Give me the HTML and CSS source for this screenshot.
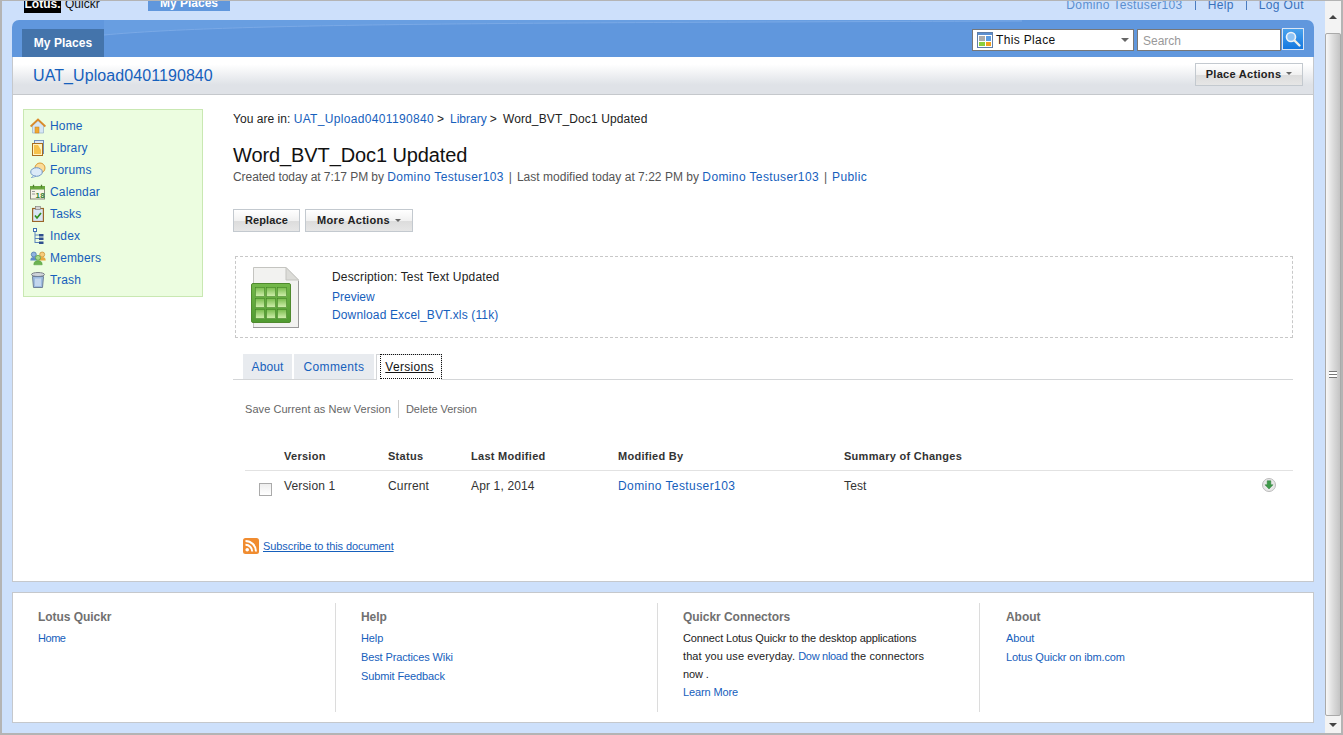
FILE: index.html
```html
<!DOCTYPE html>
<html lang="en">
<head>
<meta charset="utf-8">
<title>Word_BVT_Doc1 Updated</title>
<link rel="stylesheet" href="styles.css">
</head>
<body>
<div class="window">
  <div class="page">
    <div class="topstrip">
      <div class="brand"><span class="lotus">Lotus.</span><span class="quickr">Quickr</span></div>
      <a class="toptab">My Places</a>
      <div class="toplinks">
        <a class="user">Domino Testuser103</a><i></i><a>Help</a><i></i><a>Log Out</a>
      </div>
    </div>
    <div class="banner">
      <svg class="swoosh" viewBox="0 0 1302 37" preserveAspectRatio="none"><path d="M92 15C220 3 520 3 1010 1V0H92Z" fill="#689ee1"/><path d="M92 15C220 3 520 3 1010 1" fill="none" stroke="#7aa9e6" stroke-width="1"/></svg>
      <a class="bannertab">My Places</a>
      <div class="searchbox">
        <div class="scope">
          <svg class="scopeicon" width="16" height="16" viewBox="0 0 16 16"><rect x=".5" y=".5" width="15" height="15" fill="#fff" stroke="#5f7ea8"/><rect x="1" y="1" width="14" height="2" fill="#5b8fd0"/><rect x="2" y="4" width="6" height="5" fill="#aaa"/><rect x="9" y="4" width="5" height="5" fill="#5b9be0"/><rect x="2" y="10" width="6" height="4" fill="#8ccf3c"/><rect x="9" y="10" width="5" height="4" fill="#f0a020"/></svg>
          <span class="scopetext">This Place</span>
          <span class="caret"></span>
        </div>
        <div class="searchinput">Search</div>
        <div class="searchbtn"><svg width="18" height="18" viewBox="0 0 18 18"><circle cx="7" cy="7" r="4.500" fill="#8fc4f5" stroke="#eef3f8" stroke-width="1.600"/><path d="M10.500 10.500L15.500 15.500" stroke="#f0f0e8" stroke-width="2.400" stroke-linecap="round"/></svg></div>
      </div>
    </div>
    <div class="placebar">
      <a class="placename">UAT_Upload0401190840</a>
      <a class="btn btn-place">Place Actions<span class="caret small"></span></a>
    </div>
    <div class="main">
      <nav class="side">
        <a class="navitem"><svg class="navicon" viewBox="0 0 16 16"><path d="M2.500 7.500L8 2.500l5.500 5v7.500h-11z" fill="#d6e6f5" stroke="#9ab0c8" stroke-width=".7"/><rect x="5" y="9" width="4" height="6" fill="#f0a830" stroke="#c77f20" stroke-width=".5"/><path d="M.6 8.500L8 1.500l7.400 7" fill="none" stroke="#d98a2b" stroke-width="1.800"/></svg>Home</a>
        <a class="navitem"><svg class="navicon" viewBox="0 0 16 16"><rect x="4.500" y=".5" width="9" height="13" fill="#dbe7f5" stroke="#6f8fbc"/><rect x="2.500" y="3.500" width="10" height="12" fill="#fff3c0" stroke="#a86d20"/><path d="M4 5h4l3 5v4H4z" fill="#f6c24c"/></svg>Library</a>
        <a class="navitem"><svg class="navicon" viewBox="0 0 16 16"><circle cx="10" cy="6" r="5" fill="#fbdc98" stroke="#d99a35"/><ellipse cx="6.500" cy="10" rx="5.800" ry="4.300" fill="#dbeaf8" stroke="#6f97c6"/><path d="M3.500 13.500L1 16l5-1.700z" fill="#dbeaf8" stroke="#6f97c6" stroke-width=".6"/></svg>Forums</a>
        <a class="navitem"><svg class="navicon" viewBox="0 0 16 16"><rect x=".5" y="2.500" width="14" height="12.500" fill="#f5f3e8" stroke="#8a8a7a"/><rect x="0" y="2" width="15" height="3.500" fill="#6aa83e"/><path d="M3.500 .8v2.700M11.500 .8v2.700" stroke="#4f7f2e" stroke-width="1.300"/><path d="M2 7.500h3M2 10h3" stroke="#999"/><text class="caldate" x="5.600" y="13.500">18</text></svg>Calendar</a>
        <a class="navitem"><svg class="navicon" viewBox="0 0 16 16"><rect x="2.600" y="2.500" width="10.800" height="13" fill="#d9e6f6" stroke="#9a6528" stroke-width="1.200"/><rect x="5.500" y=".5" width="5" height="3" fill="#d4d4d4" stroke="#777" stroke-width=".6"/><path d="M5 9.500l2 2.500 4-5" fill="none" stroke="#2f8f1e" stroke-width="1.700"/></svg>Tasks</a>
        <a class="navitem"><svg class="navicon" viewBox="0 0 16 16"><rect x="3.500" y=".5" width="3" height="3" fill="#fff" stroke="#3d6fb0"/><path d="M5 4v11M5 7h4M5 10.500h4M5 14.500h4" fill="none" stroke="#5b84bb"/><rect x="9" y="6" width="4.500" height="2.500" fill="#2f4f8f"/><rect x="9" y="9.500" width="4.500" height="2.500" fill="#2f4f8f"/><rect x="9" y="13.500" width="4.500" height="2.500" fill="#2f4f8f"/></svg>Index</a>
        <a class="navitem"><svg class="navicon" viewBox="0 0 16 16"><circle cx="3.800" cy="4.500" r="2.500" fill="#8fb4e0" stroke="#3f6ea8" stroke-width=".7"/><path d="M.3 10.500c0-2.800 1.600-3.500 3.500-3.500s3.500.7 3.500 3.500z" fill="#5c8cc8"/><circle cx="12.200" cy="4.500" r="2.500" fill="#f6cd7c" stroke="#c78a28" stroke-width=".7"/><path d="M8.700 10.500c0-2.800 1.600-3.500 3.500-3.500s3.500.7 3.500 3.500z" fill="#e8a93f"/><circle cx="8" cy="7.800" r="2.500" fill="#a7d98c" stroke="#4f9a3a" stroke-width=".7"/><path d="M3.800 14.800c0-3.300 1.800-4 4.200-4s4.200.7 4.200 4z" fill="#6cb352" stroke="#4f9a3a" stroke-width=".5"/></svg>Members</a>
        <a class="navitem"><svg class="navicon" viewBox="0 0 16 16"><ellipse cx="8" cy="2.500" rx="6.500" ry="2" fill="#cfd4da" stroke="#7a8088"/><path d="M2.500 4.500h11l-1 11H3.500z" fill="#9dbbe0" stroke="#6f8098"/><path d="M6 6.500v7.500M8 6.500v7.500M10 6.500v7.500" stroke="#e9f1fb"/></svg>Trash</a>
      </nav>
      <div class="content">
        <div class="crumbs">You are in: <a class="crumbplace">UAT_Upload0401190840</a><span class="sep">&gt;</span><a>Library</a><span class="sep">&gt;</span><span class="crumbcur">Word_BVT_Doc1 Updated</span></div>
        <h1 class="doctitle">Word_BVT_Doc1 Updated</h1>
        <div class="meta">Created today at 7:17 PM by <a>Domino Testuser103</a><span class="pipe">|</span><span class="lastmod">Last modified today at 7:22 PM by </span><a>Domino Testuser103</a><span class="pipe">|</span><a>Public</a></div>
        <div class="actions">
          <a class="btn btn-replace">Replace</a>
          <a class="btn btn-more">More Actions<span class="caret small"></span></a>
        </div>
        <div class="docbox">
          <svg class="fileicon" width="48" height="61" viewBox="0 0 48 61">
            <defs>
              <linearGradient id="cell" x1="0" y1="0" x2="0" y2="1"><stop offset="0" stop-color="#78bb4c"/><stop offset="1" stop-color="#d2f0ae"/></linearGradient>
              <linearGradient id="sheet" x1="0" y1="0" x2="0" y2="1"><stop offset="0" stop-color="#74b84a"/><stop offset="1" stop-color="#4f9a30"/></linearGradient>
            </defs>
            <path d="M2.500 .5H35L47.500 13V60.500H2.500Z" fill="#f2f2f0" stroke="#c4c4c0"/>
            <path d="M35 .5L47.500 13H35Z" fill="#dcdcd8" stroke="#c4c4c0"/>
            <rect x="47" y="14" width="1" height="47" fill="#999"/>
            <rect x="2" y="60" width="46" height="1" fill="#999"/>
            <rect x=".5" y="16.500" width="39" height="39" rx="1.500" fill="url(#sheet)" stroke="#4f8a2e"/>
            <g fill="url(#cell)" stroke="#3f7f22" stroke-width=".5">
              <rect x="4.500" y="20.500" width="9" height="9"/><rect x="15.500" y="20.500" width="9" height="9"/><rect x="26.500" y="20.500" width="9" height="9"/>
              <rect x="4.500" y="31.500" width="9" height="9"/><rect x="15.500" y="31.500" width="9" height="9"/><rect x="26.500" y="31.500" width="9" height="9"/>
              <rect x="4.500" y="42.500" width="9" height="9"/><rect x="15.500" y="42.500" width="9" height="9"/><rect x="26.500" y="42.500" width="9" height="9"/>
            </g>
          </svg>
          <div class="docinfo">
            <div class="docdesc">Description: Test Text Updated</div>
            <a class="doclink first">Preview</a>
            <a class="doclink">Download Excel_BVT.xls (11k)</a>
          </div>
        </div>
        <div class="tabs">
          <a class="tab tab-about">About</a>
          <a class="tab tab-comments">Comments</a>
          <div class="tab-active"><a class="tab-focus">Versions</a></div>
        </div>
        <div class="vactions"><span>Save Current as New Version</span><i></i><span class="vdelete">Delete Version</span></div>
        <div class="vtable vhead">
          <span></span><span>Version</span><span>Status</span><span>Last Modified</span><span>Modified By</span><span>Summary of Changes</span><span></span>
        </div>
        <div class="vtable vrow">
          <span class="checkcell"><span class="check"></span></span><span>Version 1</span><span>Current</span><span>Apr 1, 2014</span><a>Domino Testuser103</a><span>Test</span>
          <span class="dlcell"><svg width="14" height="14" viewBox="0 0 14 14"><circle cx="7" cy="7" r="6.500" fill="#e8e8e8" stroke="#bbb"/><path d="M5.200 2.800h3.600v4h2.200L7 11 3 6.800h2.200z" fill="#3f9a4a" stroke="#2a7a36" stroke-width=".5"/></svg></span>
        </div>
        <div class="subscribe">
          <svg width="16" height="16" viewBox="0 0 16 16"><rect width="16" height="16" rx="2.500" fill="#f08c30"/><circle cx="4.200" cy="11.800" r="1.800" fill="#fff"/><path d="M2.500 6.800a6.700 6.700 0 0 1 6.700 6.700M2.500 3a10.500 10.500 0 0 1 10.500 10.500" fill="none" stroke="#fff" stroke-width="2"/></svg>
          <a>Subscribe to this document</a>
        </div>
      </div>
    </div>
    <footer class="footer">
      <div class="fcol">
        <h3>Lotus Quickr</h3>
        <a>Home</a>
      </div>
      <div class="fcol">
        <h3>Help</h3>
        <a>Help</a>
        <a>Best Practices Wiki</a>
        <a>Submit Feedback</a>
      </div>
      <div class="fcol">
        <h3>Quickr Connectors</h3>
        <p>Connect Lotus Quickr to the desktop applications<br><span class="line2">that you use everyday. <a class="inl">Dow nload</a> the connectors</span><br>now .</p>
        <a>Learn More</a>
      </div>
      <div class="fcol last">
        <h3>About</h3>
        <a>About</a>
        <a>Lotus Quickr on ibm.com</a>
      </div>
    </footer>
  </div>
  <div class="scrollbar">
    <div class="sbtn"><span class="arrow up"></span></div>
    <div class="thumb"><span class="grip"></span></div>
    <div class="sbtn bottom"><span class="arrow down"></span></div>
  </div>
</div>
</body>
</html>
```

FILE: styles.css
```css
* { box-sizing: border-box; }
html, body { margin: 0; padding: 0; height: 100%; overflow: hidden; }
body { font: 12px/14px "Liberation Sans", Arial, sans-serif; color: #222; }
a { color: #1660bc; text-decoration: none; }

.window { height: 735px; display: flex; border: 2px solid #b4b4b4; border-top-width: 1px; background: #cde0fb; }
.page { flex: 1; min-width: 0; padding: 0 11px 0 10px; display: flex; flex-direction: column; }

.topstrip { height: 19px; display: flex; overflow: hidden; align-items: flex-start; }
.brand { display: flex; margin: -2px 0 0 12px; width: 124px; height: 14px; align-items: flex-start; }
.lotus { background: #000; color: #fff; font-weight: bold; font-size: 12px; line-height: 10px; width: 37px; height: 14px; text-align: center; }
.quickr { color: #111; font-size: 12px; line-height: 10px; margin-left: 4px; }
.toptab { background: #6097dd; color: #fff; font-weight: bold; font-size: 12px; width: 82px; height: 10px; text-align: center; line-height: 5px; overflow: hidden; }
.toplinks { margin-left: auto; margin-right: 10px; margin-top: -3px; display: flex; align-items: flex-start; font-size: 12px; line-height: 14px; letter-spacing: .36px; }
.toplinks a { color: #3a72bb; }
.toplinks a.user { color: #5b8fd0; }
.toplinks i { width: 1px; height: 12px; background: #4a7cc0; margin: 0 12px; }

.banner { position: relative; height: 37px; background: #6097dd; border-radius: 7px 7px 0 0; display: flex; align-items: flex-end; justify-content: space-between; padding: 0 10px; }
.swoosh { position: absolute; inset: 0; width: 100%; height: 100%; }
.bannertab { position: relative; width: 82px; height: 28px; background: #4474ab; color: #fff; font-weight: bold; font-size: 12px; line-height: 28px; text-align: center; letter-spacing: .03px; }
.searchbox { position: relative; display: flex; align-self: flex-start; margin-top: 8px; align-items: flex-start; }
.scope { width: 162px; height: 22px; margin-top: 1px; background: #fff; border: 1px solid #777; display: flex; align-items: center; padding-left: 4px; margin-right: 3px; }
.scopeicon { flex: none; }
.scopetext { font-size: 12px; color: #111; margin-left: 3px; letter-spacing: .35px; flex: 1; }
.caret { width: 0; height: 0; border: 4px solid transparent; border-top: 4px solid #666; border-bottom: 0; margin-right: 4px; }
.caret.small { display: inline-block; border-width: 3px 3px 0; border-top-color: #666; margin: 0 0 2px 5px; vertical-align: middle; }
.searchinput { width: 144px; height: 22px; margin-top: 1px; background: #fff; border: 1px solid #777; padding-left: 5px; color: #999; font-size: 12px; line-height: 22px; }
.searchbtn { width: 22px; height: 22px; background: linear-gradient(#4aa2ec, #1478e0); border: 1px solid #dbe6f4; display: flex; align-items: center; justify-content: center; margin-left: 1px; }

.placebar { height: 38px; background: linear-gradient(#fff 0, #fff 20%, #dfe2e7 75%); border: 1px solid #c5c8cc; border-top: 0; display: flex; align-items: center; justify-content: space-between; padding: 0 10px 0 20px; }
.placename { font-size: 16px; line-height: 22px; color: #1660bc; letter-spacing: .08px; }

.btn { display: block; height: 23px; border: 1px solid #c3c9cf; background: linear-gradient(#fff 0, #f1f1f1 50%, #dcdcdc 52%, #e6e6e6 100%); color: #222; font-weight: bold; font-size: 11px; line-height: 21px; text-align: center; letter-spacing: .3px; }
.btn-place { width: 108px; margin-top: -3px; }
.btn-replace { width: 67px; letter-spacing: .15px; }
.btn-more { width: 108px; }

.main { flex: 1; min-height: 0; background: #fff; border: 1px solid #c5c8cc; border-top: 0; display: flex; align-items: flex-start; padding: 14px 20px 0 10px; }
.side { width: 180px; height: 188px; flex: none; background: #ecfde0; border: 1px solid #c9e8b2; padding: 5px 0 0 6px; }
.navitem { display: flex; align-items: center; height: 22px; font-size: 12px; letter-spacing: .15px; }
.navicon { width: 16px; height: 16px; flex: none; margin-right: 4px; }
.caldate { font: bold 8px "Liberation Sans", Arial, sans-serif; fill: #2f7f2e; }

.content { flex: 1; min-width: 0; margin-left: 30px; }
.crumbs { padding-top: 3px; color: #222; letter-spacing: .03px; }
.crumbplace { letter-spacing: .33px; }
.sep { margin: 0 6px 0 3px; }
.crumbcur { letter-spacing: .13px; }
.doctitle { margin: 17px 0 0; font-size: 20px; line-height: 24px; font-weight: normal; color: #111; letter-spacing: -.1px; }
.meta { margin-top: 3px; color: #555; letter-spacing: -.07px; }
.meta a { letter-spacing: .38px; }
.lastmod { letter-spacing: .02px; }
.pipe { margin: 0 5px; }
.actions { margin-top: 25px; display: flex; gap: 5px; }
.docbox { margin: 24px 0 0 2px; height: 82px; border: 1px dashed #c8c8c8; display: flex; padding: 10px 0 0 15px; }
.fileicon { flex: none; }
.docinfo { margin-left: 33px; display: flex; flex-direction: column; }
.docdesc { color: #222; line-height: 20px; letter-spacing: .17px; }
.doclink { display: block; line-height: 18px; letter-spacing: .14px; }
.doclink.first { line-height: 20px; margin-bottom: -1px; letter-spacing: 0; }

.tabs { margin-top: 16px; height: 26px; border-bottom: 1px solid #d4d6d8; display: flex; padding-left: 10px; }
.tab { height: 25px; background: #e8ebef; text-align: center; line-height: 26px; margin-right: 2px; }
.tab-about { width: 49px; letter-spacing: .1px; }
.tab-comments { width: 80px; letter-spacing: .35px; }
.tab-active { width: 66px; height: 26px; border: 1px solid #d4d6d8; border-bottom: 0; background: #fff; padding-left: 3px; }
.tab-focus { display: block; height: 25px; margin-top: -1px; margin-right: -1px; border: 1px dotted #111; color: #111; text-decoration: underline; text-align: center; line-height: 24px; letter-spacing: .3px; padding-right: 3px; }

.vactions { margin: 20px 0 0 12px; height: 18px; display: flex; align-items: center; font-size: 11px; color: #666; letter-spacing: .06px; }
.vdelete { letter-spacing: -.04px; }
.vactions i { width: 1px; height: 18px; background: #ccc; margin: 0 7px; }

.vtable { margin-left: 12px; display: grid; grid-template-columns: 39px 104px 83px 147px 226px 1fr 30px; align-items: center; }
.vhead { margin-top: 30px; height: 23px; border-bottom: 1px solid #e2e2e2; font-size: 11px; font-weight: bold; color: #333; letter-spacing: .28px; padding-bottom: 7px; }
.vrow { height: 30px; color: #333; }
.vrow span { letter-spacing: .15px; }
.vrow a { letter-spacing: .42px; }
.checkcell { display: flex; padding-left: 14px; padding-top: 6px; }
.check { width: 13px; height: 13px; border: 1px solid #aaa; background: linear-gradient(#eee, #fff); }
.dlcell { display: flex; margin-bottom: 3px; margin-left: -1px; }
.subscribe { margin: 37px 0 0 10px; display: flex; align-items: center; gap: 4px; height: 16px; font-size: 11px; letter-spacing: -.08px; }
.subscribe a { text-decoration: underline; }

.footer { margin: 10px 0; height: 131px; background: #fff; border: 1px solid #c5c8cc; display: flex; padding: 10px 0; }
.fcol { width: 322px; border-right: 1px solid #dcdcdc; padding: 6px 0 0 25px; display: flex; flex-direction: column; align-items: flex-start; font-size: 11px; letter-spacing: -.12px; }
.fcol:first-child { width: 323px; }
.fcol:first-child > a { letter-spacing: -.45px; }
.fcol.last { border: 0; padding-left: 26px; }
.fcol h3 { margin: 0 0 4px; font-size: 12px; line-height: 16px; color: #707070; font-weight: bold; letter-spacing: -.05px; }
.fcol > a { line-height: 19px; display: block; }
.fcol p { margin: 0; line-height: 18px; color: #222; }
.line2 { letter-spacing: .1px; }
.inl { letter-spacing: -.3px; }

.scrollbar { width: 16px; flex: none; background: #f0f0f0; display: flex; flex-direction: column; }
.sbtn { height: 32px; display: flex; justify-content: center; align-items: center; background: #f3f3f3; }
.sbtn.bottom { height: 17px; }
.thumb { flex: 1; border: 1px solid #aaa; border-radius: 2px; background: linear-gradient(90deg, #f8f8f8, #dcdcdc 50%, #c4c4c4); display: flex; align-items: center; justify-content: center; }
.grip { width: 8px; height: 7px; border-top: 1px solid #777; border-bottom: 1px solid #777; background: linear-gradient(#fff 0 2px, #777 2px 3px, #fff 3px); }
.arrow { width: 0; height: 0; border: 4px solid transparent; }
.arrow.up { border-bottom: 4px solid #444; border-top: 0; }
.arrow.down { border-top: 4px solid #444; border-bottom: 0; }
```
